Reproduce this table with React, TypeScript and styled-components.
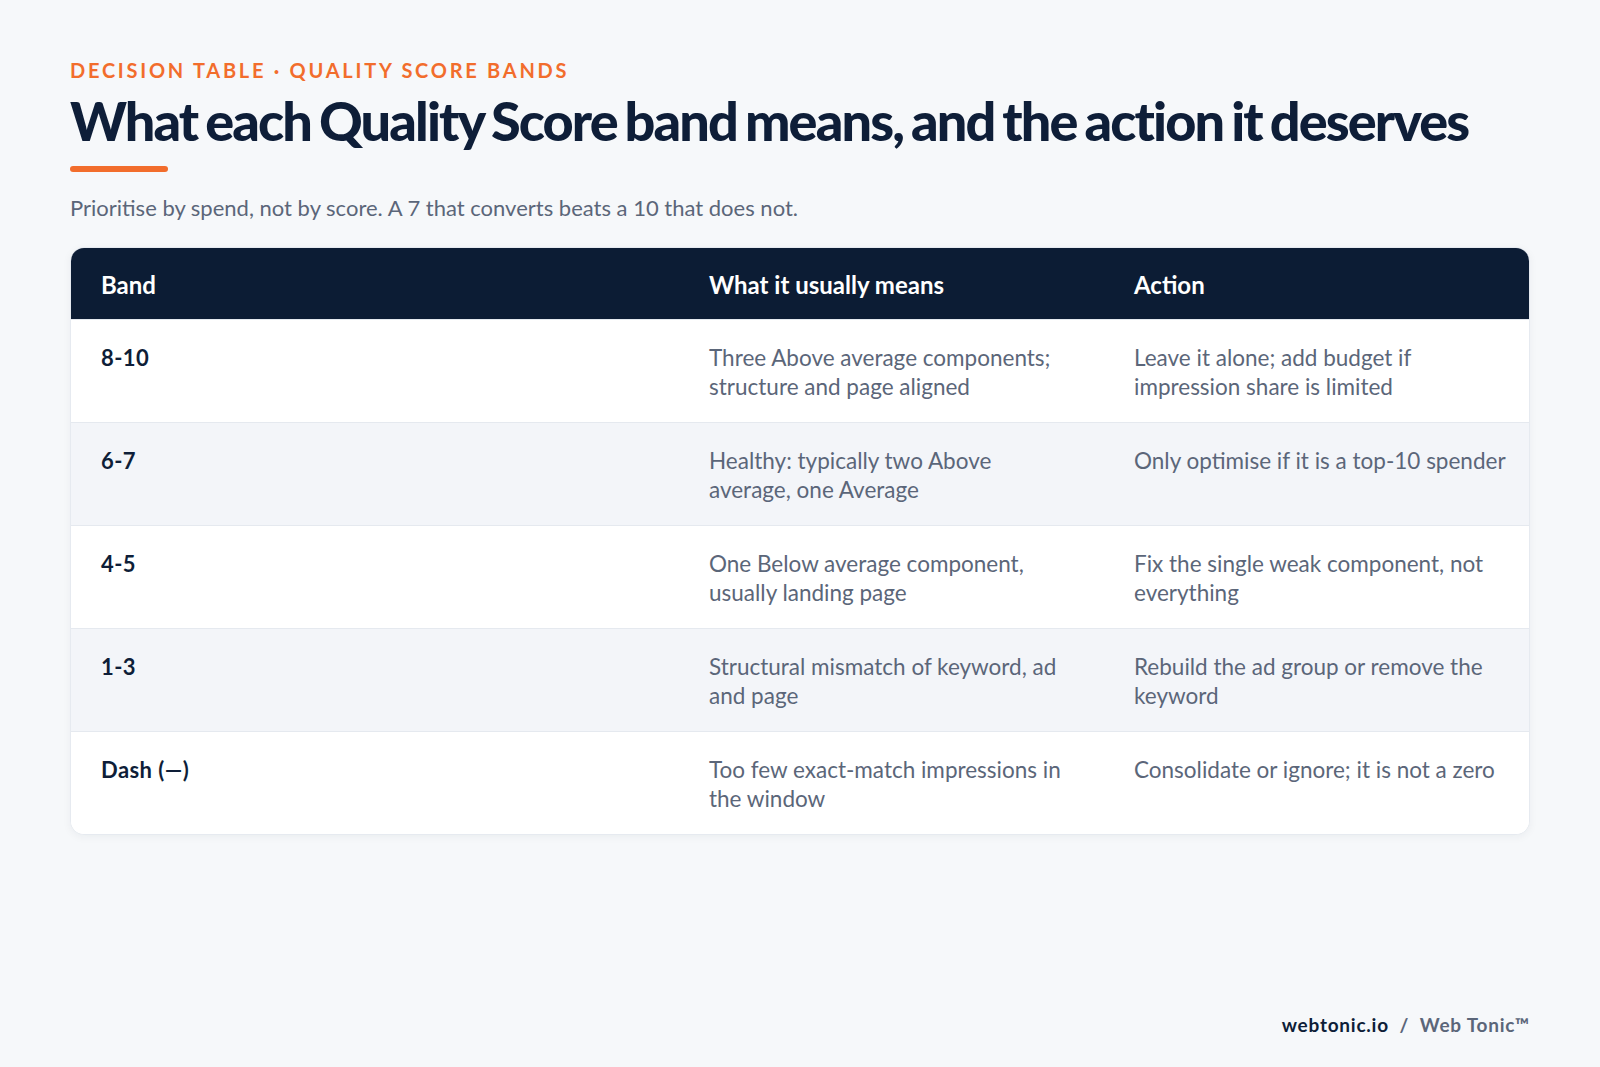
import React from "react";
import styled, { createGlobalStyle } from "styled-components";

const GlobalStyle = createGlobalStyle`
  html, body { margin: 0; padding: 0; background: #f6f8fa; }
  body { font-family: Lato, "Open Sans", sans-serif; -webkit-font-smoothing: antialiased; }
  * { box-sizing: border-box; }
`;

const Page = styled.div`
  width: 1600px;
  height: 1067px;
  background: #f6f8fa;
  padding: 57px 70px 0 70px;
  display: flex;
  flex-direction: column;
  position: relative;
`;

const Eyebrow = styled.div`
  font-family: Lato, sans-serif;
  font-weight: 700;
  font-size: 20px;
  letter-spacing: 0.137em;
  color: #f26d2c;
  text-transform: uppercase;
  line-height: 26px;
`;

const Title = styled.h1`
  margin: 6px 0 0 0;
  font-family: Lato, sans-serif;
  font-weight: 900;
  font-size: 54px;
  line-height: 64px;
  letter-spacing: -0.035em;
  word-spacing: -3px;
  color: #0e1e38;
  white-space: nowrap;
`;

const Accent = styled.div`
  width: 98px;
  height: 6px;
  border-radius: 3px;
  background: #f26d2c;
  margin-top: 13px;
`;

const Subtitle = styled.p`
  margin: 21px 0 0 0;
  font-family: Lato, sans-serif;
  font-size: 22px;
  line-height: 30px;
  color: #5b6679;
`;

const Table = styled.div`
  margin-top: 24px;
  width: 1460px;
  border-radius: 14px;
  overflow: hidden;
  background: #ffffff;
  border: 1px solid #e6eaf0;
  box-shadow: 0 2px 8px rgba(15, 30, 60, 0.05);
  display: flex;
  flex-direction: column;
`;

const Row = styled.div<{ $head?: boolean; $alt?: boolean }>`
  display: grid;
  grid-template-columns: 608px 425px 1fr;
  background: ${(p) => (p.$head ? "#0c1c34" : p.$alt ? "#f3f5f9" : "#ffffff")};
  border-top: ${(p) => (p.$head ? "none" : "1px solid #e5e9ef")};
`;

const HeadCell = styled.div`
  padding: 22px 30px 20px 30px;
  font-family: Lato, sans-serif;
  font-weight: 700;
  font-size: 24px;
  line-height: 29px;
  color: #ffffff;
  &:last-child { padding-right: 20px; }
`;

const Cell = styled.div<{ $band?: boolean }>`
  padding: 24px 30px 21px 30px;
  font-family: Lato, sans-serif;
  font-weight: ${(p) => (p.$band ? 700 : 400)};
  font-size: ${(p) => (p.$band ? "22px" : "22.5px")};
  letter-spacing: ${(p) => (p.$band ? "0.02em" : "0")};
  line-height: 28.5px;
  color: ${(p) => (p.$band ? "#0e1e38" : "#5b6679")};
  min-height: 102px;
  &:last-child { padding-right: 20px; }
`;

const Footer = styled.div`
  position: absolute;
  right: 70px;
  bottom: 31px;
  font-family: Lato, sans-serif;
  font-weight: 700;
  font-size: 19px;
  letter-spacing: 0.04em;
  color: #0e1e38;
`;

const FooterMuted = styled.span`
  color: #5b6679;
`;

const rows = [
  ["8-10", "Three Above average components; structure and page aligned", "Leave it alone; add budget if impression share is limited"],
  ["6-7", "Healthy: typically two Above average, one Average", "Only optimise if it is a top-10 spender"],
  ["4-5", "One Below average component, usually landing page", "Fix the single weak component, not everything"],
  ["1-3", "Structural mismatch of keyword, ad and page", "Rebuild the ad group or remove the keyword"],
  ["Dash (—)", "Too few exact-match impressions in the window", "Consolidate or ignore; it is not a zero"],
];

export default function App() {
  return (
    <>
      <GlobalStyle />
      <Page>
        <Eyebrow>Decision table · Quality Score bands</Eyebrow>
        <Title>What each Quality Score band means, and the action it deserves</Title>
        <Accent />
        <Subtitle>Prioritise by spend, not by score. A 7 that converts beats a 10 that does not.</Subtitle>
        <Table>
          <Row $head>
            <HeadCell>Band</HeadCell>
            <HeadCell>What it usually means</HeadCell>
            <HeadCell>Action</HeadCell>
          </Row>
          {rows.map((r, i) => (
            <Row key={r[0]} $alt={i % 2 === 1}>
              <Cell $band>{r[0]}</Cell>
              <Cell>{r[1]}</Cell>
              <Cell>{r[2]}</Cell>
            </Row>
          ))}
        </Table>
        <Footer>
          webtonic.io <FooterMuted>&nbsp;/&nbsp; Web Tonic™</FooterMuted>
        </Footer>
      </Page>
    </>
  );
}
